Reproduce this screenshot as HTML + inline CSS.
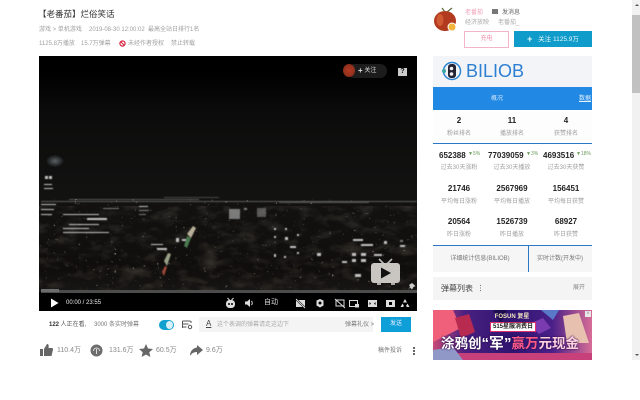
<!DOCTYPE html>
<html lang="zh"><head><meta charset="utf-8"><style>
html,body{margin:0;padding:0;width:640px;height:400px;overflow:hidden;background:#fff}
body{position:relative;font-family:"Liberation Sans","Noto Sans CJK SC",sans-serif;color:#999}
#w{position:absolute;left:0;top:0;width:640px;height:400px;filter:blur(.35px)}
.t{position:absolute;white-space:nowrap;font-size:6px;line-height:8px;color:#a0a0a0}
.c{transform:translateX(-50%)}
.n{font-size:8px;font-weight:bold;color:#222}
.b{position:absolute}
svg{position:absolute;overflow:visible}
</style></head><body><div id="w">
<div class="t" style="left:38px;top:8px;font-size:8.500px;line-height:12px;color:#333">【老番茄】烂俗笑话</div>
<div class="t" style="left:39px;top:26px">游戏 &gt; 单机游戏</div>
<div class="t" style="left:89px;top:26px">2019-08-30 12:00:02</div>
<div class="t" style="left:148px;top:26px">最高全站日排行1名</div>
<div class="t" style="left:39px;top:40px">1125.8万播放</div>
<div class="t" style="left:81px;top:40px">15.7万弹幕</div>
<svg style="left:119px;top:40px" width="7" height="7" viewBox="0 0 7 7"><circle cx="3.500" cy="3.500" r="2.600" fill="none" stroke="#d0102f" stroke-width="1.100"/><path d="M1.700 1.700L5.300 5.300" stroke="#d0102f" stroke-width="1"/></svg>
<div class="t" style="left:128px;top:40px">未经作者授权</div>
<div class="t" style="left:171px;top:40px">禁止转载</div>

<div class="b" style="left:39px;top:56px;width:378px;height:255px;background:#000"></div>
<svg style="left:39px;top:56px" width="378" height="255" viewBox="0 0 378 255">
<defs><linearGradient id="g" x1="0" y1="0" x2="0" y2="1"><stop offset="0" stop-color="#000"/><stop offset=".2" stop-color="#0c0c0c"/><stop offset=".55" stop-color="#121211"/><stop offset=".9" stop-color="#100e0c"/><stop offset="1" stop-color="#181614"/></linearGradient>
<radialGradient id="m"><stop offset="0" stop-color="#5f6462"/><stop offset=".6" stop-color="#2e3234"/><stop offset="1" stop-color="#111"/></radialGradient>
<filter id="nz" x="0" y="0" width="100%" height="100%"><feTurbulence type="fractalNoise" baseFrequency=".28 .34" numOctaves="2" seed="7"/><feColorMatrix values="0 0 0 0 .85  0 0 0 0 .82  0 0 0 0 .72  3 3 0 0 -3.900"/></filter>
<filter id="nd" x="0" y="0" width="100%" height="100%"><feTurbulence type="fractalNoise" baseFrequency=".05 .09" numOctaves="3" seed="3"/><feColorMatrix values="0 0 0 0 .3  0 0 0 0 .26  0 0 0 0 .2  1.500 1.500 0 0 -1.400"/></filter>
<filter id="bl" x="-5%" y="-5%" width="110%" height="110%"><feGaussianBlur stdDeviation=".5"/></filter>
</defs>
<rect y="14" width="378" height="222" fill="url(#g)"/>
<rect x="0" y="150" width="378" height="85" filter="url(#nd)" opacity=".25"/>
<rect x="0" y="148" width="378" height="85" filter="url(#nz)" opacity=".45"/>
<rect x="0" y="143" width="378" height="5" filter="url(#nz)" opacity=".9"/>
<g filter="url(#bl)">
<ellipse cx="16" cy="105" rx="9" ry="6" fill="url(#m)"/>
<g fill="#999"><rect x="2" y="145" width="376" height="1" opacity=".55"/><rect x="30" y="143" width="130" height="1" opacity=".5"/><rect x="125" y="141" width="55" height="1" opacity=".4"/><rect x="240" y="146" width="90" height="1" opacity=".45"/></g>
<g fill="#ccc" opacity=".95"><rect x="2" y="148" width="15" height="1"/><rect x="2" y="153" width="13" height="1"/><rect x="2" y="158" width="11" height="1"/><rect x="5" y="128" width="8" height="1"/><rect x="5" y="132" width="9" height="1"/><rect x="6" y="120" width="3" height="3"/><rect x="10" y="120" width="3" height="3"/>
<rect x="24" y="158" width="36" height="1"/><rect x="48" y="162" width="20" height="2"/><rect x="30" y="168" width="30" height="1"/><rect x="24" y="172" width="26" height="1"/><rect x="24" y="176" width="46" height="1"/><rect x="64" y="152" width="16" height="1" opacity=".6"/>
<rect x="100" y="150" width="9" height="1"/><rect x="100" y="154" width="10" height="1" opacity=".6"/><rect x="100" y="158" width="7" height="1" opacity=".6"/>
<rect x="137" y="182" width="3" height="4"/><rect x="143" y="183" width="6" height="2"/><rect x="112" y="188" width="12" height="1"/><rect x="118" y="192" width="10" height="2"/>
<rect x="190" y="153" width="11" height="10" opacity=".6"/><rect x="218" y="152" width="9" height="9" opacity=".4"/><rect x="205" y="152" width="3" height="2" opacity=".6"/>
<rect x="235" y="172" width="2" height="2"/><rect x="246" y="172" width="2" height="2"/><rect x="235" y="180" width="2" height="2"/><rect x="246" y="181" width="3" height="3"/><rect x="235" y="198" width="2" height="3"/><rect x="245" y="200" width="2" height="2"/><rect x="258" y="178" width="2" height="2"/><rect x="258" y="196" width="2" height="2"/><rect x="251" y="190" width="6" height="2"/>
<rect x="313" y="197" width="4" height="3"/><rect x="322" y="197" width="5" height="3"/><rect x="313" y="203" width="4" height="3"/><rect x="322" y="203" width="5" height="3"/><rect x="303" y="205" width="5" height="2"/><rect x="335" y="198" width="8" height="2"/><rect x="316" y="218" width="6" height="3"/>
<rect x="314" y="183" width="10" height="2"/><rect x="322" y="188" width="12" height="2"/><rect x="345" y="185" width="3" height="3"/><rect x="361" y="189" width="5" height="2"/><rect x="361" y="184" width="3" height="2" opacity=".6"/><rect x="278" y="197" width="4" height="3"/></g>
<g><path d="M125 205l4-8 3 1-4 12z" fill="#98a088"/><path d="M123 216l3-6 2 1-3 9z" fill="#a04838"/><path d="M148 178l6-8 3 2-5 10z" fill="#b8b098"/><path d="M145 190l3-10 4 2-4 10z" fill="#4a7a50"/></g>
</g>
<rect x="2" y="234" width="376" height="3" fill="#4c4c4c"/>
<rect x="2" y="233" width="18" height="3" fill="#6c6c6c"/>
</svg>
<svg style="left:371px;top:258px" width="29" height="28" viewBox="0 0 29 28"><path d="M8 1l5 5M21 1l-5 5" stroke="#bbb" stroke-width="1.600"/><rect x="0" y="5" width="29" height="20" rx="3" fill="#c9c6c2"/><path d="M10 9.500l10 5.500-10 5.500z" fill="#111"/><rect x="6" y="25" width="4" height="2" fill="#aaa"/><rect x="20" y="25" width="4" height="2" fill="#aaa"/></svg>
<svg style="left:407px;top:283px" width="9" height="9" viewBox="0 0 9 9"><path d="M5 0l3.500 3-2 1-1.500 2.500-2-2L1 7l2-3.500L2 2z" fill="#ccc"/></svg>
<!-- top right of video -->
<div class="b" style="left:347px;top:64px;width:40px;height:14px;border-radius:7px;background:#1c1c1c"></div>
<div class="b" style="left:343px;top:64px;width:12px;height:13px;border-radius:50%;background:radial-gradient(circle at 50% 50%,#b43a24,#7c2a18)"></div>
<div class="t" style="left:358px;top:67px;color:#ddd"><b style="font-size:8px;line-height:8px;vertical-align:-1px">+</b> 关注</div>
<div class="b" style="left:398px;top:68px;width:9px;height:8px;background:#ccc;color:#111;font:bold 7px/8px 'Liberation Sans',sans-serif;text-align:center">?</div>
<!-- controls -->
<svg style="left:50px;top:298px" width="9" height="10" viewBox="0 0 9 10"><path d="M1 .5L8.500 5 1 9.500z" fill="#fff"/></svg>
<div class="t" style="left:66px;top:299px;color:#eee">00:00&nbsp;/&nbsp;23:55</div>
<svg style="left:226px;top:298px" width="190" height="11" viewBox="0 0 190 11" fill="#ddd" stroke="none">
<rect x="0" y="2" width="9" height="8" rx="3.500"/><path d="M1.500 0l2 2M7.500 0l-2 2" stroke="#ddd"/><circle cx="3" cy="6" r="1" fill="#000"/><circle cx="6" cy="6" r="1" fill="#000"/>
<path d="M19 3.500h2l3-2.500v8l-3-2.500h-2z"/><path d="M25.500 3c1 1 1 3 0 4" stroke="#ddd" fill="none"/>
<rect x="70" y="2" width="9" height="7"/><path d="M70 1l9 9" stroke="#000" stroke-width="2"/><path d="M70 1l9 9" stroke="#ddd"/>
<path d="M94 1l3.500 1.500v5L94 9.500l-3.500-2v-5z"/><circle cx="94" cy="5" r="1.500" fill="#000"/>
<path d="M110 2h8v6h-8z" fill="none" stroke="#ddd"/><path d="M109 1l10 9" stroke="#ddd"/>
<rect x="123.500" y="2.500" width="8" height="6" fill="none" stroke="#ddd"/><rect x="129" y="6" width="4" height="3.500"/>
<rect x="142" y="2" width="9" height="7"/><path d="M145 5.500l-1.500-1.500v3zM148 5.500l1.500-1.500v3z" fill="#000"/>
<rect x="160" y="2" width="9" height="7"/><rect x="163" y="4" width="3" height="3" fill="#000"/>
<path d="M179 1l2 3.500h-4zM174.500 9l2-3.500 1.500 2.500-1 1zM183.500 9l-2-3.500-1.500 2.500 1 1z"/>
</svg>
<div class="t" style="left:264px;top:299px;color:#ddd;font-size:7px">自动</div>

<!-- under video bar -->
<div class="t" style="left:49px;top:321px;color:#555"><b style="color:#333">122</b> 人正在看,</div>
<div class="t" style="left:94px;top:321px;color:#777">3000 条实时弹幕</div>
<div class="b" style="left:159px;top:320px;width:15px;height:10px;border-radius:5px;background:#11a1d0"></div>
<div class="b" style="left:166px;top:321px;width:7px;height:8px;border-radius:50%;background:#d8f0f8"></div>
<svg style="left:182px;top:320px" width="11" height="10" viewBox="0 0 11 10"><path d="M.5 1h8M.5 4h6M.5 7h4M.5 1v7M9 1v2" stroke="#555" stroke-width="1" fill="none"/><circle cx="8" cy="7" r="1.700" fill="none" stroke="#555"/></svg>
<div class="b" style="left:199px;top:317px;width:174px;height:15px;border-radius:2px 0 0 2px;background:#f4f4f4"></div>
<div class="t" style="left:206px;top:320px;color:#444;font-size:8px;text-decoration:underline">A</div>
<div class="t" style="left:217px;top:321px;color:#aaa">这个表调的弹幕请走这边下</div>
<div class="t" style="left:345px;top:321px;color:#777">弹幕礼仪 &gt;</div>
<div class="b" style="left:381px;top:317px;width:30px;height:15px;background:#0e9fd8;color:#eef;font-size:6px;line-height:15px;text-align:center">发送</div>

<!-- actions -->
<svg style="left:40px;top:344px" width="13" height="13" viewBox="0 0 13 13"><rect x="0" y="5" width="3" height="7" fill="#666"/><path d="M4 5l3-5c1.500 0 2 1 1.500 4H12c1 0 1 1 1 1.500L11.500 12H4z" fill="#666"/></svg>
<div class="t" style="left:57px;top:347px;font-size:7px;color:#888">110.4万</div>
<svg style="left:90px;top:344px" width="13" height="13" viewBox="0 0 13 13"><circle cx="6.500" cy="6.500" r="6" fill="#6d6d6d"/><path d="M3.500 7c0-4 6-4 6 0M6.500 5v5" stroke="#ddd" fill="none"/></svg>
<div class="t" style="left:109px;top:347px;font-size:7px;color:#888">131.6万</div>
<svg style="left:139px;top:344px" width="14" height="13" viewBox="0 0 14 13"><path d="M7 0l2 4.500 5 .5-3.700 3.300 1.100 4.700L7 10.500 2.600 13l1.100-4.700L0 5l5-.5z" fill="#666"/></svg>
<div class="t" style="left:156px;top:347px;font-size:7px;color:#888">60.5万</div>
<svg style="left:190px;top:345px" width="13" height="12" viewBox="0 0 13 12"><path d="M7 0l6 5-6 5V7C4 7 2 8 0 11c0-5 3-8 7-8.500z" fill="#666"/></svg>
<div class="t" style="left:206px;top:347px;font-size:7px;color:#888">9.6万</div>
<div class="t" style="left:378px;top:347px;color:#777">稿件投诉</div>
<div class="b" style="left:413px;top:347px;width:2px;height:2px;background:#666;box-shadow:0 3px #666,0 6px #666"></div>

<!-- UP -->
<svg style="left:433px;top:7px" width="26" height="26" viewBox="0 0 26 26"><path d="M9 1l3 4M19 1l-5 4" stroke="#5a6a3a" stroke-width="1.200"/><ellipse cx="12" cy="14" rx="11" ry="10" fill="#b23a1f"/><ellipse cx="7" cy="13" rx="3.500" ry="6" fill="#cf5a34"/><circle cx="19" cy="20" r="4" fill="#f2b33a" stroke="#fff"/></svg>
<div class="t" style="left:465px;top:9px;color:#f0a0b8">老番茄</div>
<div class="b" style="left:492px;top:9px;width:6px;height:5px;background:#777"></div>
<div class="t" style="left:502px;top:9px;color:#666">发消息</div>
<div class="t" style="left:465px;top:19px;color:#aaa">经济放映</div>
<div class="t" style="left:498px;top:19px;color:#aaa">老番茄_</div>
<div class="b" style="left:464px;top:31px;width:43px;height:15px;border:1px solid #f3b4c8;color:#f08aa8;font-size:6px;line-height:15px;text-align:center">充电</div>
<div class="b" style="left:514px;top:31px;width:78px;height:16px;background:#0f9cca;color:#e8f6fb;font-size:6.500px;line-height:16px;text-align:center"><b style="font-size:9px;vertical-align:-1px;margin-right:4px">+</b> 关注 1125.9万</div>

<!-- biliob -->
<div class="b" style="left:433px;top:56px;width:159px;height:31px;background:#f3f4f8"></div>
<svg style="left:442px;top:61px" width="20" height="20" viewBox="0 0 20 20"><circle cx="10" cy="10" r="8.500" fill="none" stroke="#2c84d0" stroke-width="1.500"/><rect x="6" y="3" width="8" height="14" rx="3" fill="#223"/><circle cx="9.500" cy="7.500" r="1.800" fill="#eee"/><circle cx="9.500" cy="13" r="1.800" fill="#eee"/><circle cx="2" cy="10" r="2" fill="#3aa6a6"/></svg>
<div class="t" style="left:466px;top:60px;font-size:18px;line-height:23px;color:#2d7fd2">BILIOB</div>
<div class="b" style="left:433px;top:87px;width:159px;height:23px;background:#2189e3"></div>
<div class="t c" style="left:497px;top:95px;color:#cde4fa">概况</div>
<div class="t" style="left:579px;top:95px;color:#e4f0fc;text-decoration:underline">数据</div>
<div class="b" style="left:433px;top:110px;width:159px;height:34px;background:#fdfdfd"></div>
<div class="b" style="left:433px;top:143px;width:159px;height:1px;background:#2c78c8"></div>
<div class="b" style="left:433px;top:245px;width:159px;height:1px;background:#2c78c8"></div>

<div class="t c n" style="left:459px;top:117px">2</div><div class="t c n" style="left:512px;top:117px">11</div><div class="t c n" style="left:566px;top:117px">4</div>
<div class="t c" style="left:459px;top:130px">粉丝排名</div><div class="t c" style="left:512px;top:130px">播放排名</div><div class="t c" style="left:566px;top:130px">获赞排名</div>

<div class="t n" style="left:439px;top:151.500px">652388</div><div class="t" style="left:468px;top:150px;font-size:5px;color:#6a9a5a">▼5%</div>
<div class="t n" style="left:488px;top:151.500px">77039059</div><div class="t" style="left:526px;top:150px;font-size:5px;color:#6a9a5a">▼3%</div>
<div class="t n" style="left:543px;top:151.500px">4693516</div><div class="t" style="left:576px;top:150px;font-size:5px;color:#6a9a5a">▼18%</div>
<div class="t c" style="left:459px;top:164px">过去30天涨粉</div><div class="t c" style="left:512px;top:164px">过去30天播放</div><div class="t c" style="left:566px;top:164px">过去30天获赞</div>

<div class="t c n" style="left:459px;top:185px">21746</div><div class="t c n" style="left:512px;top:185px">2567969</div><div class="t c n" style="left:566px;top:185px">156451</div>
<div class="t c" style="left:459px;top:198px">平均每日涨粉</div><div class="t c" style="left:512px;top:198px">平均每日播放</div><div class="t c" style="left:566px;top:198px">平均每日获赞</div>

<div class="t c n" style="left:459px;top:218px">20564</div><div class="t c n" style="left:512px;top:218px">1526739</div><div class="t c n" style="left:566px;top:218px">68927</div>
<div class="t c" style="left:459px;top:231px">昨日涨粉</div><div class="t c" style="left:512px;top:231px">昨日播放</div><div class="t c" style="left:566px;top:231px">昨日获赞</div>

<div class="b" style="left:433px;top:246px;width:159px;height:26px;background:#f6f6f6"></div>
<div class="b" style="left:528px;top:245px;width:1px;height:27px;background:#2c78c8"></div>
<div class="t c" style="left:480px;top:255px;color:#777">详细统计信息(BILIOB)</div>
<div class="t c" style="left:560px;top:255px;color:#777">实时计数(开发中)</div>
<div class="b" style="left:433px;top:277px;width:159px;height:23px;background:#f4f4f4"></div>
<div class="t" style="left:441px;top:284px;font-size:8px;line-height:10px;color:#444">弹幕列表</div>
<div class="b" style="left:480px;top:285px;width:1px;height:1px;background:#777;box-shadow:0 2.500px #777,0 5px #777"></div>
<div class="t" style="left:573px;top:284px;color:#888">展开</div>

<!-- ad -->
<div class="b" style="left:433px;top:310px;width:159px;height:50px;overflow:hidden;background:linear-gradient(90deg,#c84a78 0,#4a2080 20%,#2e1470 50%,#4a2088 75%,#d86c98 100%)">
<svg style="left:0;top:0" width="159" height="50" viewBox="0 0 159 50"><path d="M0 0h20l8 18-28 14z" fill="#f0607a"/><path d="M22 8l14-4 6 18-14 6z" fill="#b82a50"/><path d="M108 0h18l-6 10z" fill="#5a78c8"/><path d="M60 0h14l-6 14z" fill="#1e0c50"/><path d="M96 14l14-6 8 10-12 6z" fill="#7a3ab0"/><path d="M130 6l16-3 10 30h-22z" fill="#e8c0b0"/><path d="M0 43h159v7H0z" fill="#c8407a"/><path d="M0 40l20-3 10 13H0z" fill="#9098c8"/></svg>
<div class="t c" style="left:79px;top:3px;color:#f4e8c0;font-size:6px;font-weight:bold">FOSUN 复星</div>
<div class="b c" style="left:80px;top:12px;width:44px;height:8px;background:#fff;border:1px solid #e03070;color:#222;font-size:6px;line-height:8px;text-align:center;white-space:nowrap;font-weight:bold">515星服消费日</div>
<div class="t" style="left:8px;top:26px;font-size:13.500px;line-height:16px;color:#fff;font-weight:bold;text-shadow:0 0 2px #301050,0 0 1px #301050">涂鸦创<span style="font-size:15px">“军”</span><span style="color:#ff5a8a">赢万</span><span style="color:#ffd0e0">元现金</span></div>
<div class="b" style="right:1px;top:1px;width:6px;height:6px;background:#e8e8e8;color:#999;font-size:6px;line-height:6px;text-align:center">×</div>
</div>

<!-- scrollbar -->
<div class="b" style="left:632px;top:0;width:8px;height:360px;background:#f1f1f1"></div>
<div class="b" style="left:632px;top:15px;width:8px;height:78px;background:#c1c1c1"></div>
<div class="b" style="left:635px;top:4px;width:0;height:0;border:2px solid transparent;border-bottom-color:#555;border-top:0"></div>
<div class="b" style="left:635px;top:354px;width:0;height:0;border:2px solid transparent;border-top-color:#555;border-bottom:0"></div>
</div></body></html>
